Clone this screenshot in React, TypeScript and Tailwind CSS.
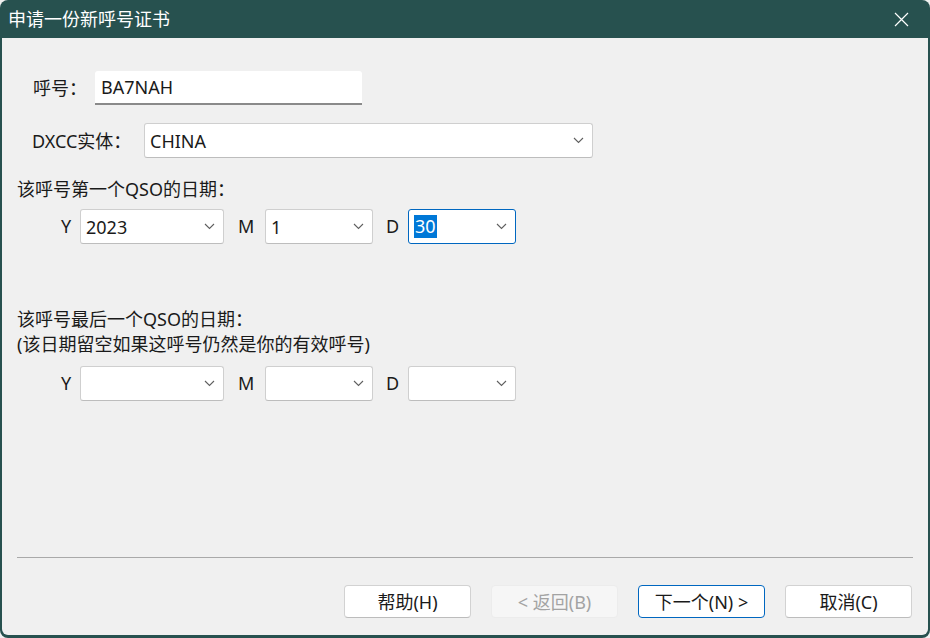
import React from "react";

const FONT = '"Noto Sans", "Noto Sans CJK SC", sans-serif';

function Chevron() {
  return (
    <svg width="11" height="7" viewBox="0 0 11 7" className="shrink-0">
      <path d="M1 1 L5.5 5.5 L10 1" fill="none" stroke="#5f5f5f" strokeWidth="1.1" />
    </svg>
  );
}

function Combo({
  value,
  width,
  focused,
}: {
  value?: string;
  width: string;
  focused?: boolean;
}) {
  return (
    <div
      className={`${width} h-[35px] bg-white rounded-[3px] flex items-center justify-between pl-[5px] pr-[8px] ${
        focused ? "border border-[#0067c0]" : "border border-[#cfcfcf] border-b-[#bdbdbd]"
      }`}
    >
      <span className="text-[18px] text-[#1a1a1a] leading-none">
        {value && focused ? (
          <span className="inline-block bg-[#0078d7] text-white px-[1px] leading-[23px]">{value}</span>
        ) : (
          value
        )}
      </span>
      <Chevron />
    </div>
  );
}

function DateFields({ y, m, d, focused }: { y?: string; m?: string; d?: string; focused?: boolean }) {
  return (
    <div className="flex items-center pl-[59px] text-[18px] text-[#1a1a1a]">
      <span className="w-[19px]">Y</span>
      <Combo value={y} width="w-[144px]" />
      <span className="w-[27px] ml-[14px]">M</span>
      <Combo value={m} width="w-[108px]" />
      <span className="w-[22px] ml-[13px]">D</span>
      <Combo value={d} width="w-[108px]" focused={focused} />
    </div>
  );
}

function Button({
  children,
  disabled,
  primary,
}: {
  children: React.ReactNode;
  disabled?: boolean;
  primary?: boolean;
}) {
  return (
    <button
      className={`w-[127px] h-[33px] rounded-[4px] text-[18px] leading-none flex items-center justify-center ${
        disabled
          ? "bg-[#f6f6f6] border border-[#ececec] text-[#a3a3a3]"
          : primary
          ? "bg-white border border-[#0067c0] text-[#1a1a1a]"
          : "bg-white border border-[#d2d2d2] border-b-[#bcbcbc] text-[#1a1a1a]"
      }`}
    >
      {children}
    </button>
  );
}

export default function App() {
  return (
    <div className="w-[930px] h-[638px] bg-[#f0f0f0]" style={{ fontFamily: FONT }}>
      <div className="w-full h-full rounded-[8px] bg-[#27514f] flex flex-col px-[2px] pb-[3px] overflow-hidden">
        {/* 标题栏 */}
        <div className="h-[38px] flex items-center justify-between pl-[6px] pr-[19px] shrink-0">
          <span className="text-white text-[18px] leading-none">申请一份新呼号证书</span>
          <svg width="15" height="15" viewBox="0 0 15 15">
            <path d="M1 1 L14 14 M14 1 L1 14" stroke="#ffffff" strokeWidth="1.2" />
          </svg>
        </div>

        {/* 内容 */}
        <div className="flex-1 bg-[#f0f0f0] rounded-b-[6px] flex flex-col text-[#1a1a1a] text-[18px]">
          <div className="flex items-center mt-[33px] pl-[31px]">
            <span className="w-[62px] leading-[22px]">呼号：</span>
            <div className="w-[267px] h-[34px] bg-white rounded-t-[3px] border-b-2 border-[#8a8a8a] flex items-center pl-[6px]">
              BA7NAH
            </div>
          </div>

          <div className="flex items-center mt-[18px] pl-[30px]">
            <span className="w-[112px] leading-[22px]">DXCC实体：</span>
            <Combo value="CHINA" width="w-[449px]" />
          </div>

          <div className="mt-[20px] pl-[15px] h-[22px] leading-[22px]">该呼号第一个QSO的日期：</div>
          <div className="mt-[9px]">
            <DateFields y="2023" m="1" d="30" focused />
          </div>

          <div className="mt-[63px] pl-[15px] leading-[25px]">
            <div>该呼号最后一个QSO的日期：</div>
            <div>(该日期留空如果这呼号仍然是你的有效呼号)</div>
          </div>
          <div className="mt-[9px]">
            <DateFields />
          </div>

          <div className="mt-auto mx-[15px] h-px bg-[#a9a9a9]" />
          <div className="flex justify-end gap-[20px] pr-[16px] mt-[27px] mb-[17px]">
            <Button>帮助(H)</Button>
            <Button disabled>&lt; 返回(B)</Button>
            <Button primary>下一个(N) &gt;</Button>
            <Button>取消(C)</Button>
          </div>
        </div>
      </div>
    </div>
  );
}
